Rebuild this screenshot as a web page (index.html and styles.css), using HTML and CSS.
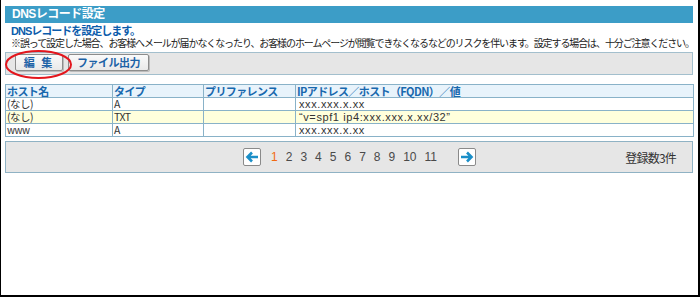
FILE: index.html
```html
<!DOCTYPE html>
<html lang="ja">
<head>
  <meta charset="UTF-8" />
  <title>DNSレコード設定</title>
  <link rel="stylesheet" href="styles.css">
</head>
<body>
  <div class="frame">
    <div class="panel">
      <!-- TITLE -->
      <h1 class="title">DNSレコード設定</h1>
      <p class="lead">DNSレコードを設定します。</p>
      <p class="note">※誤って設定した場合、お客様へメールが届かなくなったり、お客様のホームページが閲覧できなくなるなどのリスクを伴います。設定する場合は、十分ご注意ください。</p>

      <!-- TOOLBAR -->
      <div class="toolbar">
        <button class="btn btn-edit">編 集</button>
        <button class="btn">ファイル出力</button>
        <svg class="mark" width="70" height="32" viewBox="0 0 70 32">
          <ellipse cx="33.5" cy="15.5" rx="32.5" ry="13.5" fill="none" stroke="#e3161d" stroke-width="2"/>
        </svg>
      </div>

      <!-- RECORDS -->
      <table class="records">
        <colgroup>
          <col class="c-host"><col class="c-type"><col class="c-pref"><col>
        </colgroup>
        <thead>
          <tr><th>ホスト名</th><th>タイプ</th><th>プリファレンス</th><th>IPアドレス／ホスト（FQDN）／値</th></tr>
        </thead>
        <tbody>
          <tr><td>(なし)</td><td>A</td><td></td><td class="val">xxx.xxx.x.xx</td></tr>
          <tr class="alt"><td>(なし)</td><td>TXT</td><td></td><td class="val">“v=spf1 ip4:xxx.xxx.x.xx/32”</td></tr>
          <tr><td class="small">www</td><td>A</td><td></td><td class="val">xxx.xxx.x.xx</td></tr>
        </tbody>
      </table>

      <!-- PAGER -->
      <div class="pager">
        <div class="pages">
          <a class="arrow" href="#">
            <svg width="14" height="12" viewBox="0 0 14 12"><path d="M13 6H3M7 1.5L2.5 6 7 10.5" fill="none" stroke="#1b8fc8" stroke-width="2.6"/></svg>
          </a>
          <a class="num current" href="#">1</a>
          <a class="num" href="#">2</a>
          <a class="num" href="#">3</a>
          <a class="num" href="#">4</a>
          <a class="num" href="#">5</a>
          <a class="num" href="#">6</a>
          <a class="num" href="#">7</a>
          <a class="num" href="#">8</a>
          <a class="num" href="#">9</a>
          <a class="num" href="#">10</a>
          <a class="num" href="#">11</a>
          <a class="arrow next" href="#">
            <svg width="14" height="12" viewBox="0 0 14 12"><path d="M1 6H11M7 1.5L11.5 6 7 10.5" fill="none" stroke="#1b8fc8" stroke-width="2.6"/></svg>
          </a>
        </div>
        <div class="count">登録数3件</div>
      </div>
    </div>
  </div>
</body>
</html>
```

FILE: styles.css
```css
/* BASE */
html, body { margin: 0; background: #fff; }
body {
  font-family: "Liberation Sans", "Noto Sans CJK JP", sans-serif;
  color: #222;
}

.frame {
  box-sizing: border-box;
  width: 700px;
  height: 297px;
  border-left: 1px solid #000;
  border-right: 2px solid #000;
  border-bottom: 2px solid #000;
}
.panel {
  padding: 6px 5px 0 4px;
}

/* TITLE + TEXT */
.title {
  margin: 0;
  height: 17px;
  line-height: 17px;
  background: #3c9dc7;
  color: #fff;
  font-size: 12px;
  font-weight: 700;
  padding-left: 7px;
  letter-spacing: -0.5px;
}
.lead {
  margin: 2px 0 0;
  padding-left: 6px;
  font-size: 11px;
  line-height: 12px;
  font-weight: 700;
  color: #0b5cab;
  letter-spacing: -1px;
}
.note {
  margin: 0;
  padding-left: 6px;
  font-size: 10px;
  line-height: 13px;
  letter-spacing: -1.1px;
  white-space: nowrap;
  color: #222;
}

/* TOOLBAR */
.toolbar {
  position: relative;
  margin-top: 2px;
  height: 20px;
  background: #e6e6e6;
  border: 1px solid #a3bfcd;
  padding: 1px 0 0 9px;
  display: flex;
  gap: 5px;
}
.btn {
  height: 17px;
  padding: 0 8px;
  border: 1px solid #8c8c8c;
  border-radius: 2px;
  background: linear-gradient(#fafafa, #e9e9e9);
  box-shadow: 1px 1px 0 #bbb;
  font-family: "Noto Sans CJK JP", sans-serif;
  font-size: 11px;
  font-weight: 700;
  line-height: 15px;
  color: #1d62a6;
  letter-spacing: -0.5px;
}
.btn-edit { width: 48px; padding: 0; letter-spacing: 2px; }
.mark {
  position: absolute;
  left: -1px;
  top: -4px;
}

/* TABLE */
.records {
  margin-top: 9px;
  width: 689px;
  border-collapse: collapse;
  border: 1px solid #89b2c8;
  font-size: 11px;
}
.c-host { width: 107px; }
.c-type { width: 91px; }
.c-pref { width: 92px; }
.records th,
.records td {
  border: 1px solid #89b2c8;
  height: 12px;
  line-height: 12px;
  padding: 0 1px;
  text-align: left;
  white-space: nowrap;
}
.records th {
  background: #e8f3fb;
  color: #1868ae;
  font-family: "Noto Sans CJK JP", sans-serif;
  font-weight: 700;
  letter-spacing: -0.6px;
}
.records td {
  font-family: "Noto Sans CJK JP", sans-serif;
  font-size: 10.5px;
  color: #333;
  background: #fff;
  letter-spacing: -0.5px;
}
.records tr.alt td { background: #ffffdc; }
.records td.val {
  font-family: "Liberation Sans", sans-serif;
  font-size: 11px;
  letter-spacing: 0.6px;
  padding-left: 3px;
}
.records td.small { font-size: 10px; }

/* PAGER */
.pager {
  margin-top: 4px;
  height: 30px;
  border: 1px solid #8fb2c4;
  background: #e6e6e6;
  display: flex;
  align-items: center;
}
.pages {
  display: flex;
  align-items: center;
  margin-left: 237px;
}
.arrow {
  box-sizing: border-box;
  width: 18px;
  height: 18px;
  border: 1px solid #8a8a8a;
  border-radius: 2px;
  background: #fff;
  display: flex;
  align-items: center;
  justify-content: center;
  margin-right: 6px;
}
.arrow.next { margin: 0 0 0 17px; }
.num {
  font-family: "Liberation Sans", sans-serif;
  font-size: 12px;
  color: #4a4a4a;
  text-decoration: none;
  padding: 0 4px;
}
.num.current { color: #f26a10; }
.count {
  margin-left: auto;
  padding-right: 16px;
  font-family: "Noto Sans CJK JP", sans-serif;
  font-size: 12px;
  color: #333;
  letter-spacing: -0.8px;
}
```
